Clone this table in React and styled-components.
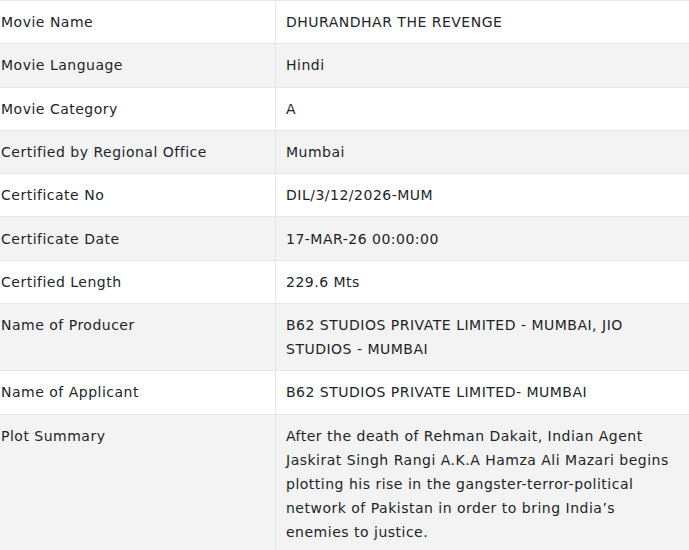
import React from 'react'
import styled, { createGlobalStyle } from 'styled-components'

const Global = createGlobalStyle`
  body {
    margin: 0;
    background: #fff;
    font-family: "DejaVu Sans", "Noto Sans", sans-serif;
  }
`

const Table = styled.table`
  width: 100%;
  border-collapse: collapse;
  border-top: 1px solid #e6e6e6;
  color: #212529;
  font-size: 14px;
  line-height: 24px;
  letter-spacing: 0.5px;
`

const Row = styled.tr`
  background: ${p => (p.$shade ? '#f3f3f3' : '#fff')};
  border-bottom: 1px solid #e6e6e6;
`

const Label = styled.td`
  width: 274px;
  padding: 9.2px 0 9.1px 1px;
  vertical-align: top;
  border-right: 1px solid #e6e6e6;
`

const Value = styled.td`
  padding: 9.2px 9px 9.1px 10px;
  vertical-align: top;
`

const rows = [
  ['Movie Name', 'DHURANDHAR THE REVENGE'],
  ['Movie Language', 'Hindi'],
  ['Movie Category', 'A'],
  ['Certified by Regional Office', 'Mumbai'],
  ['Certificate No', 'DIL/3/12/2026-MUM'],
  ['Certificate Date', '17-MAR-26 00:00:00'],
  ['Certified Length', '229.6 Mts'],
  ['Name of Producer', 'B62 STUDIOS PRIVATE LIMITED - MUMBAI, JIO STUDIOS - MUMBAI'],
  ['Name of Applicant', 'B62 STUDIOS PRIVATE LIMITED- MUMBAI'],
  [
    'Plot Summary',
    'After the death of Rehman Dakait, Indian Agent Jaskirat Singh Rangi A.K.A Hamza Ali Mazari begins plotting his rise in the gangster-terror-political network of Pakistan in order to bring India\u2019s enemies to justice.',
  ],
]

const App = () => {
  return (
    <>
      <Global />
      <Table>
        <tbody>
          {rows.map(([k, v], i) => (
            <Row key={k} $shade={i % 2 === 1}>
              <Label>{k}</Label>
              <Value>{v}</Value>
            </Row>
          ))}
        </tbody>
      </Table>
    </>
  )
}

export default App
